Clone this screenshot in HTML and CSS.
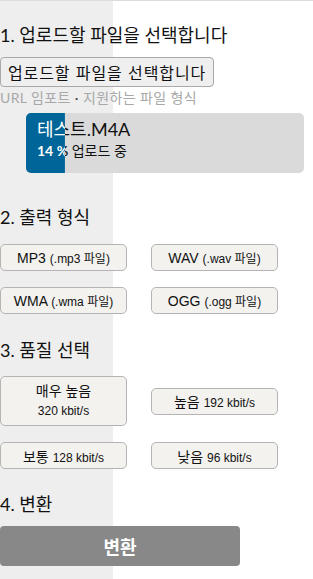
FILE: index.html
```html
<!DOCTYPE html>
<html lang="ko">
<head>
    <meta charset="UTF-8">
    <meta name="viewport" content="width=device-width, initial-scale=1.0">
    <title>오디오 변환</title>
    <link rel="stylesheet" href="styles.css">
</head>
<body>
    <main class="converter">
        <section class="step step-upload">
            <h2 class="step-title">1. 업로드할 파일을 선택합니다</h2>
            <button class="file-btn" type="button">업로드할 파일을 선택합니다</button>
            <p class="file-links"><span class="muted">URL 임포트</span> · <span class="muted">지원하는 파일 형식</span></p>
            <div class="upload">
                <div class="upload-info">
                    <div class="upload-name">테스트.M4A</div>
                    <div class="upload-status"><b>14 %</b> 업로드 중</div>
                </div>
                <!-- same text in white, clipped to the progress -->
                <div class="upload-info upload-fill" style="clip-path: inset(0 86% 0 0)" aria-hidden="true">
                    <div class="upload-name">테스트.M4A</div>
                    <div class="upload-status"><b>14 %</b> 업로드 중</div>
                </div>
            </div>
        </section>

        <section class="step step-format">
            <h2 class="step-title">2. 출력 형식</h2>
            <div class="option-grid">
                <button class="option" type="button">MP3 <small>(.mp3 파일)</small></button>
                <button class="option" type="button">WAV <small>(.wav 파일)</small></button>
                <button class="option" type="button">WMA <small>(.wma 파일)</small></button>
                <button class="option" type="button">OGG <small>(.ogg 파일)</small></button>
            </div>
        </section>

        <section class="step step-quality">
            <h2 class="step-title">3. 품질 선택</h2>
            <div class="option-grid">
                <button class="option option-tall" type="button">매우 높음<small>320 kbit/s</small></button>
                <button class="option" type="button">높음 <small>192 kbit/s</small></button>
                <button class="option" type="button">보통 <small>128 kbit/s</small></button>
                <button class="option" type="button">낮음 <small>96 kbit/s</small></button>
            </div>
        </section>

        <section class="step step-convert">
            <h2 class="step-title">4. 변환</h2>
            <button class="convert-btn" type="button">변환</button>
        </section>
    </main>
</body>
</html>
```

FILE: styles.css
```css
body {
    margin: 0;
    min-height: 578px;
    border-top: 1px solid #dcdcdc;
    background: linear-gradient(to right, #eeeeee 113px, #ffffff 113px);
    font-family: Lato, "Noto Sans CJK KR", sans-serif;
    color: #111;
}
.step-title {
    margin: 0;
    font-size: 18px;
    line-height: 22px;
    font-weight: normal;
}
.step-upload {
    padding-top: 23px;
}
.step-format {
    margin-top: 33px;
}
.step-quality {
    margin-top: 25px;
}
.step-convert {
    margin-top: 24px;
}
.file-btn {
    display: block;
    margin-top: 11px;
    height: 30px;
    padding: 0 7px;
    border: 1px solid #a9a9a9;
    border-radius: 4px;
    background: #efefef;
    font-family: "Noto Sans CJK KR", sans-serif;
    font-size: 16px;
    letter-spacing: 0.9px;
    color: #111;
}
.file-links {
    margin: 2px 0 0;
    font-size: 14px;
    line-height: 18px;
    letter-spacing: 0.4px;
    color: #444;
}
.muted {
    color: #a8a8a8;
}
.upload {
    position: relative;
    width: 278px;
    height: 60px;
    margin: 6px 0 0 26px;
    border-radius: 5px;
    background: #dadada;
    overflow: hidden;
}
.upload-info {
    height: 100%;
    padding: 4px 11px 0;
    box-sizing: border-box;
}
.upload-name {
    font-size: 18px;
    line-height: 24px;
}
.upload-status {
    font-size: 14px;
    line-height: 20px;
}
.upload-fill {
    position: absolute;
    top: 0;
    left: 0;
    right: 0;
    background: #006699;
    color: #fff;
}
.option-grid {
    display: grid;
    grid-template-columns: 127px 127px;
    column-gap: 24px;
    row-gap: 16px;
    align-items: center;
    margin-top: 16px;
}
.step-quality .option-grid {
    margin-top: 15px;
}
.option {
    height: 27px;
    padding: 0 4px;
    border: 1px solid #b4b4b4;
    border-radius: 5px;
    background: #f3f2ef;
    font-family: "Liberation Sans", Arial, "Noto Sans CJK KR", sans-serif;
    font-size: 14px;
    color: #111;
}
.option small {
    font-size: 12px;
}
.option-tall {
    height: 50px;
    line-height: 20px;
}
.option-tall small {
    display: block;
    line-height: 20px;
}
.convert-btn {
    display: block;
    width: 240px;
    height: 40px;
    margin-top: 11px;
    border: 0;
    border-radius: 4px;
    background: #888888;
    color: #fff;
    font-family: "Noto Sans CJK KR", sans-serif;
    font-size: 18px;
    font-weight: bold;
}
```
